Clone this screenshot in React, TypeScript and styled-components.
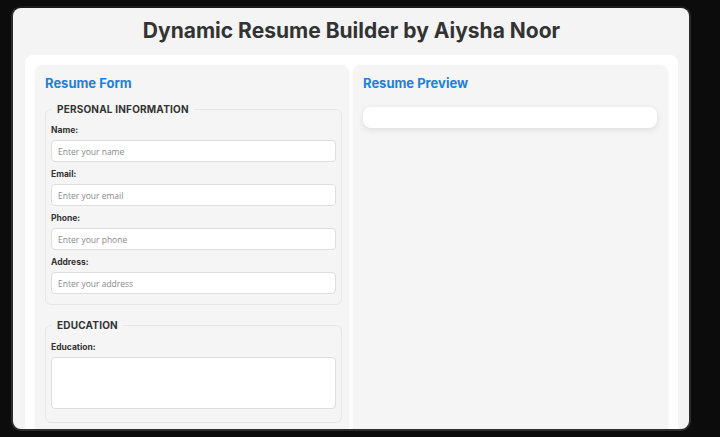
import React from "react";
import styled, { createGlobalStyle } from "styled-components";

const Global = createGlobalStyle`
  html, body { margin: 0; padding: 0; background: #0c0c0c; }
  body { font-family: Inter, "Noto Sans", sans-serif; }
  * { box-sizing: border-box; }
`;

const Window = styled.div`
  margin: 6px 0 0 11px;
  width: 680px;
  height: 425px;
  border: 2px solid #2c2c2c;
  border-top-color: #1c1c1c;
  border-radius: 10px;
  background: #f4f4f4;
  overflow: hidden;
  padding: 10px 11px 0 12px;
`;

const Title = styled.h1`
  margin: 0 0 12px;
  font-size: 21px;
  line-height: 25px;
  font-weight: 700;
  color: #333;
  text-align: center;
`;

const Card = styled.div`
  background: #fff;
  border-radius: 8px;
  padding: 10px;
  display: grid;
  grid-template-columns: 314px 315px;
  gap: 4px;
  min-height: 400px;
`;

const Panel = styled.section<{ $right?: boolean }>`
  background: #f5f5f5;
  border-radius: 8px;
  padding: 10px ${(p) => (p.$right ? "11px" : "7px")} 10px 10px;
  box-shadow: 0 1px 4px rgba(0, 0, 0, 0.04);
`;

const Heading = styled.h2<{ $gap: number }>`
  margin: 0 0 ${(p) => p.$gap}px;
  font-size: 13px;
  line-height: 16px;
  font-weight: 700;
  color: #1e80d8;
`;

const FieldSet = styled.fieldset<{ $bottom: number }>`
  margin: 0 0 13px;
  padding: 0 5px ${(p) => p.$bottom}px;
  border: 1px solid #e6e6e6;
  border-radius: 6px;
  min-width: 0;
`;

const Legend = styled.legend<{ $gap: number }>`
  margin-left: 1px;
  padding: 0 5px;
  font-size: 10px;
  line-height: 14px;
  font-weight: 700;
  color: #333;
  letter-spacing: 0.2px;
  margin-bottom: ${(p) => p.$gap}px;
`;

const Label = styled.label`
  display: block;
  font-size: 8.5px;
  line-height: 12px;
  font-weight: 700;
  color: #333;
  margin-bottom: 4px;
`;

const Input = styled.input`
  display: block;
  width: 100%;
  height: 22px;
  margin: 0 0 6px;
  padding: 0 6px;
  border: 1px solid #dedede;
  border-radius: 4px;
  background: #fff;
  font-family: "Open Sans", Inter, sans-serif;
  font-size: 8.5px;
  color: #333;
  &::placeholder { color: #8a8a8a; }
`;

const TextArea = styled.textarea`
  display: block;
  width: 100%;
  height: 52px;
  margin: 0;
  padding: 6px;
  border: 1px solid #dedede;
  border-radius: 4px;
  background: #fff;
  resize: none;
  font-family: "Open Sans", Inter, sans-serif;
  font-size: 8.5px;
`;

const Preview = styled.div`
  height: 21px;
  background: #fff;
  border-radius: 8px;
  box-shadow: 0 2px 6px rgba(0, 0, 0, 0.1);
`;

const fields = [
  { label: "Name:", ph: "Enter your name" },
  { label: "Email:", ph: "Enter your email" },
  { label: "Phone:", ph: "Enter your phone" },
  { label: "Address:", ph: "Enter your address" },
];

export default function App() {
  return (
    <>
      <Global />
      <Window>
        <Title>Dynamic Resume Builder by Aiysha Noor</Title>
        <Card>
          <Panel>
            <Heading $gap={11}>Resume Form</Heading>
            <FieldSet $bottom={4}>
              <Legend $gap={8}>PERSONAL INFORMATION</Legend>
              {fields.map((f) => (
                <div key={f.label}>
                  <Label>{f.label}</Label>
                  <Input placeholder={f.ph} />
                </div>
              ))}
            </FieldSet>
            <FieldSet $bottom={13}>
              <Legend $gap={9}>EDUCATION</Legend>
              <Label>Education:</Label>
              <TextArea />
            </FieldSet>
          </Panel>
          <Panel $right>
            <Heading $gap={16}>Resume Preview</Heading>
            <Preview />
          </Panel>
        </Card>
      </Window>
    </>
  );
}
